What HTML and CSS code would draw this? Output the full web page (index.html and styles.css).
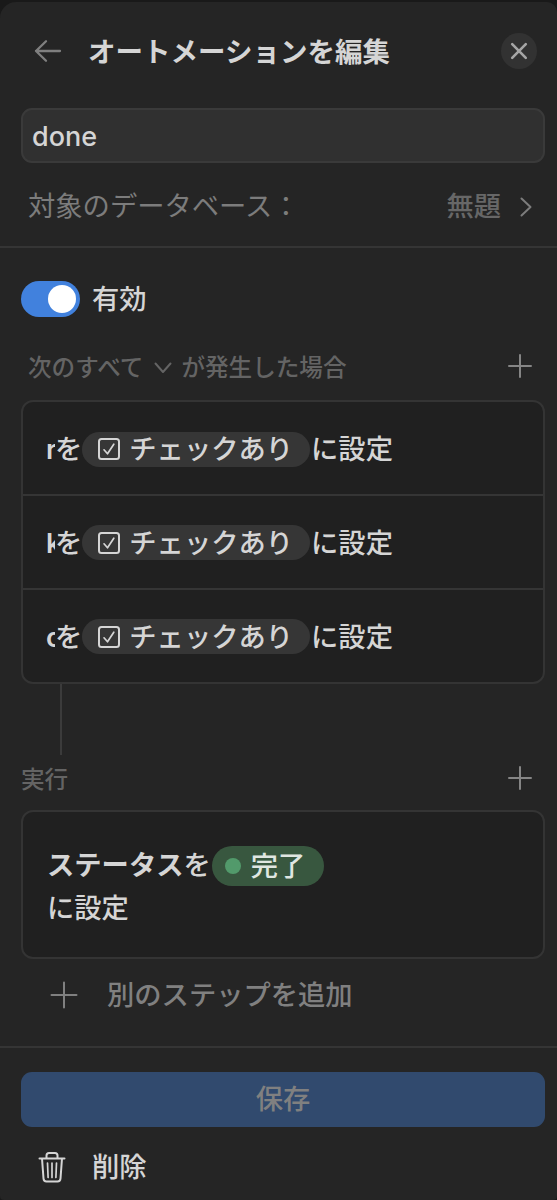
FILE: index.html
```html
<!DOCTYPE html>
<html lang="ja">
<head>
<meta charset="utf-8">
<title>オートメーションを編集</title>
<link rel="stylesheet" href="styles.css">
</head>
<body>
<main class="panel">
  <header class="header">
    <svg class="back" width="28" height="24" viewBox="0 0 28 24"><path d="M26 12H2M12 2.2 2 12l10 9.8"/></svg>
    <h1 class="title">オートメーションを編集</h1>
    <button class="close" aria-label="閉じる"><svg width="18" height="18" viewBox="0 0 18 18"><path d="M2.2 2.2l13.6 13.6M15.8 2.2 2.2 15.8"/></svg></button>
  </header>
  <div class="name">done</div>
  <div class="source">
    <span>対象のデータベース：</span>
    <span class="source-value">無題<svg width="12" height="20" viewBox="0 0 12 20"><path d="M1.5 1.5 10.5 10l-9 8.500"/></svg></span>
  </div>
  <section class="body">
    <div class="enabled"><span class="toggle"><i class="knob"></i></span><span class="label">有効</span></div>
    <div class="caption when">
      <span class="caption-text">次のすべて<svg class="chevron" width="18" height="12" viewBox="0 0 18 12"><path d="M1.500 1.500 9 10l7.500-8.500"/></svg>が発生した場合</span>
      <svg class="plus" width="26" height="26" viewBox="0 0 26 26"><path d="M13 2v22M2 13h22"/></svg>
    </div>
    <div class="card">
      <div class="rule"><b class="prop">r</b><span class="label">を</span><span class="pill"><svg width="24" height="24" viewBox="0 0 24 24"><rect x="2" y="2" width="20" height="20" rx="2.500"/><path class="tick" d="M7 12.800l3.500 4L16.800 7.200"/></svg><span class="label">チェックあり</span></span><span class="label">に設定</span></div>
      <div class="rule"><b class="prop">k</b><span class="label">を</span><span class="pill"><svg width="24" height="24" viewBox="0 0 24 24"><rect x="2" y="2" width="20" height="20" rx="2.500"/><path class="tick" d="M7 12.800l3.500 4L16.800 7.200"/></svg><span class="label">チェックあり</span></span><span class="label">に設定</span></div>
      <div class="rule"><b class="prop">c</b><span class="label">を</span><span class="pill"><svg width="24" height="24" viewBox="0 0 24 24"><rect x="2" y="2" width="20" height="20" rx="2.500"/><path class="tick" d="M7 12.800l3.500 4L16.800 7.200"/></svg><span class="label">チェックあり</span></span><span class="label">に設定</span></div>
    </div>
    <div class="connector"></div>
    <div class="caption run">
      <span class="caption-text">実行</span>
      <svg class="plus" width="26" height="26" viewBox="0 0 26 26"><path d="M13 2v22M2 13h22"/></svg>
    </div>
    <div class="card action">
      <div class="action-line"><b>ステータス</b>を<span class="status"><i class="dot"></i><span class="label">完了</span></span></div>
      <div class="action-line">に設定</div>
    </div>
    <div class="add"><svg width="30" height="30" viewBox="0 0 30 30"><path d="M15 2.500v25M2.500 15h25"/></svg><span class="label">別のステップを追加</span></div>
  </section>
  <footer class="footer">
    <button class="save">保存</button>
    <div class="delete"><svg width="28" height="32" viewBox="0 0 28 32"><path d="M1.500 7.500h25M8.500 7V4.500q0-2.500 2.500-2.500h6q2.500 0 2.500 2.500V7M4 7.500l1.500 20q.2 3 3 3h11q2.800 0 3-3L24 7.500"/><path class="thin" d="M9.500 12l.6 14.500M14 12v14.500M18.500 12l-.6 14.500"/></svg><span class="label">削除</span></div>
  </footer>
</main>
</body>
</html>
```
FILE: styles.css
```css
* { box-sizing: border-box; }
body {
  margin: 0;
  background: #191919;
  color: #d5d5d5;
  font: 500 27.300px/36px Inter, "Noto Sans CJK JP", sans-serif;
}
svg { fill: none; stroke: currentColor; stroke-width: 2; stroke-linecap: round; stroke-linejoin: round; flex: none; }
button { border: 0; padding: 0; font: inherit; }
.panel {
  height: 1198px;
  margin-top: 2px;
  overflow: hidden;
  border-radius: 16px 10px 4px 4px;
  background: #252525;
}
.header { display: flex; align-items: center; height: 98px; padding: 0 20px 0 34px; }
.back { color: #7f7f7f; stroke-width: 2.300; }
.title { flex: 1; margin: 0 0 0 26px; padding-top: 2px; font-size: 27.500px; font-weight: 700; line-height: 36px; }
.close {
  display: flex; align-items: center; justify-content: center;
  width: 36px; height: 36px; border-radius: 50%;
  background: #323232; color: #a5a5a5;
}
.close svg { stroke-width: 2.600; }
.name {
  display: flex; align-items: center;
  height: 55px; margin: 8px 12px 0 21px; padding: 2px 9px 0;
  border: 2px solid #3a3a3a; border-radius: 11px; background: #303030;
  font-size: 27px;
}
.source {
  display: flex; align-items: center; justify-content: space-between;
  height: 85px; padding: 4px 25px 0 28px;
  border-bottom: 2px solid #353535;
  color: #7c7c7c; font-weight: 400;
}
.source-value { display: flex; align-items: center; color: #676767; font-weight: 500; }
.source-value svg { margin-left: 19px; color: #7c7c7c; }
.body { height: 798px; padding: 33px 12px 0 21px; }
.enabled { display: flex; align-items: center; height: 36px; }
.label { padding-top: 2px; }
.toggle {
  display: flex; justify-content: flex-end; align-items: center;
  width: 59px; height: 36px; margin-right: 12px; padding-right: 4px;
  border-radius: 18px; background: #4181dd;
}
.knob { width: 28px; height: 28px; border-radius: 50%; background: #fff; }
.caption {
  display: flex; align-items: center; justify-content: space-between;
  padding-right: 12px; color: #646464; font-size: 23.600px;
}
.caption-text { display: flex; align-items: center; padding-top: 2px; }
.when { height: 83px; padding-left: 7px; padding-top: 14px; }
.when .caption-text { padding-top: 4px; }
.chevron { margin: 0 9px 0 11px; }
.plus { color: #858585; }
.card { border: 2px solid #343434; border-radius: 12px; background: #202020; }
.rule { display: flex; align-items: center; height: 94px; padding: 1px 0 0 23px; }
.rule:first-child { height: 92px; padding-top: 2px; }
.rule + .rule { border-top: 2px solid #353535; }
.prop { width: 9px; padding-top: 2px; overflow: hidden; font-weight: 600; }
.pill {
  display: flex; align-items: center; height: 35px; padding: 0 17px 0 15px;
  margin-right: 1px; border-radius: 18px; background: #363636;
}
.pill svg { margin-right: 8px; }
.connector { width: 2px; height: 71px; margin-left: 39px; background: #3b3b3b; }
.run { height: 55px; padding-bottom: 9px; }
.run .caption-text { padding-top: 3px; }
.action { height: 149px; padding: 32px 24px 0; }
.action-line { display: flex; align-items: center; height: 43px; }
.action-line b { font-weight: 700; }
.status {
  display: flex; align-items: center; height: 40px; padding: 0 19px 0 13px;
  margin-left: 1px; border-radius: 20px; background: #38573f; color: #dfe6e1;
}
.dot { width: 16px; height: 16px; margin-right: 10px; border-radius: 50%; background: #529a6b; }
.add { display: flex; align-items: center; height: 71px; padding-left: 28px; color: #808080; }
.add svg { margin-right: 28px; }
.footer { border-top: 2px solid #353535; padding: 24px 12px 0 21px; }
.save { width: 100%; height: 55px; border-radius: 11px; background: #314a6e; color: #808080; }
.delete { display: flex; align-items: center; height: 79px; padding-left: 17px; }
.delete svg { margin-right: 26px; }
.thin, .tick { stroke-width: 1.700; }
```
